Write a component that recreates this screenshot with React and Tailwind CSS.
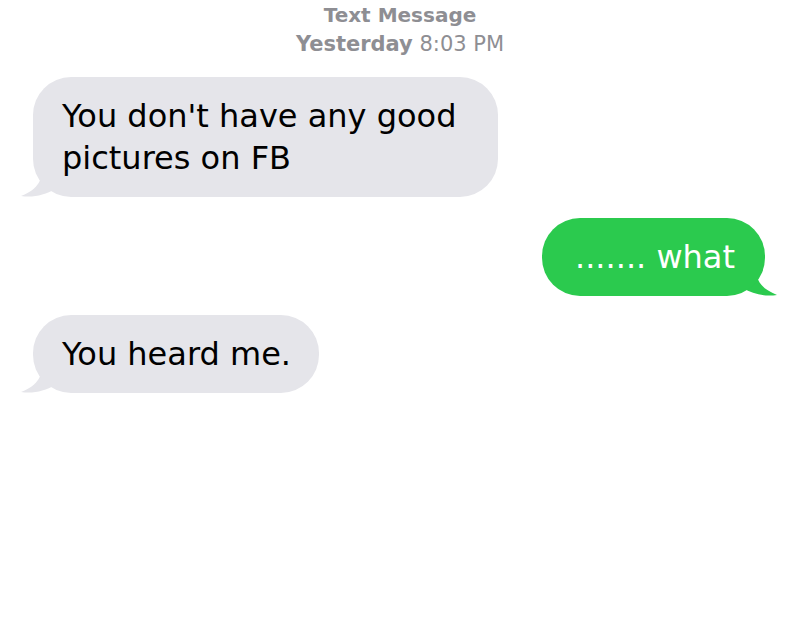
import React from "react";

const font = { fontFamily: '"DejaVu Sans", "Liberation Sans", Arial, sans-serif' };

const TailLeft = () => (
  <svg
    className="absolute -left-[12px] bottom-0"
    width="34"
    height="34"
    viewBox="0 0 34 34"
  >
    <path d="M22 0 C22 16 18 26 0 33 C12 35 24 32 34 26 L34 0 Z" fill="#e5e5ea" />
  </svg>
);

const TailRight = () => (
  <svg
    className="absolute -right-[12px] bottom-0"
    width="34"
    height="34"
    viewBox="0 0 34 34"
  >
    <path d="M12 0 C12 16 16 26 34 33 C22 35 10 32 0 26 L0 0 Z" fill="#2bca4e" />
  </svg>
);

const Incoming = ({ children, className, pad }) => (
  <div className={"relative self-start " + className}>
    <div
      className={
        "relative z-10 rounded-[38px] bg-[#e5e5ea] pl-[29px] py-[18px] text-[32px] leading-[42px] text-black " +
        pad
      }
    >
      {children}
    </div>
    <TailLeft />
  </div>
);

const Outgoing = ({ children, className }) => (
  <div className={"relative self-end " + className}>
    <div className="relative z-10 rounded-[38px] bg-[#2bca4e] pl-[33px] pr-[30px] py-[18px] text-[32px] leading-[42px] text-white">
      {children}
    </div>
    <TailRight />
  </div>
);

export default function App() {
  return (
    <div className="w-[800px] h-[640px] bg-white overflow-hidden" style={font}>
      <div className="pt-[1px] text-center text-[20px] leading-[29px] text-[#8e8e93]">
        <div className="font-semibold">Text Message</div>
        <div className="text-[21px]">
          <span className="font-semibold">Yesterday</span> 8:03 PM
        </div>
      </div>
      <div className="flex flex-col px-[33px] pr-[35px]">
        <Incoming className="mt-[18px]" pad="pr-[42px]">
          You don't have any good
          <br />
          pictures on FB
        </Incoming>
        <Outgoing className="mt-[21px]">....... what</Outgoing>
        <Incoming className="mt-[19px]" pad="pr-[28px]">
          You heard me.
        </Incoming>
      </div>
    </div>
  );
}
